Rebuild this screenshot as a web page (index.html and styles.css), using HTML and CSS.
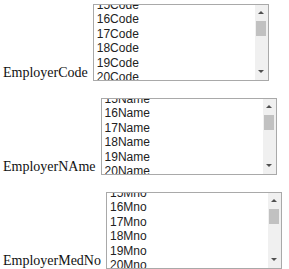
FILE: index.html
```html
<!DOCTYPE html>
<html lang="en">
<head>
    <meta charset="UTF-8">
    <title>Employer lists</title>
    <link rel="stylesheet" href="styles.css">
</head>
<body>
    <div class="field">
        <span class="label">EmployerCode</span>
        <div class="listbox">
            <div class="items">
                <div class="item">15Code</div>
                <div class="item">16Code</div>
                <div class="item">17Code</div>
                <div class="item">18Code</div>
                <div class="item">19Code</div>
                <div class="item">20Code</div>
            </div>
            <div class="scrollbar">
                <span class="arrow up"></span>
                <span class="thumb"></span>
                <span class="arrow down"></span>
            </div>
        </div>
    </div>

    <div class="field">
        <span class="label">EmployerNAme</span>
        <div class="listbox">
            <div class="items">
                <div class="item">15Name</div>
                <div class="item">16Name</div>
                <div class="item">17Name</div>
                <div class="item">18Name</div>
                <div class="item">19Name</div>
                <div class="item">20Name</div>
            </div>
            <div class="scrollbar">
                <span class="arrow up"></span>
                <span class="thumb"></span>
                <span class="arrow down"></span>
            </div>
        </div>
    </div>

    <div class="field">
        <span class="label">EmployerMedNo</span>
        <div class="listbox">
            <div class="items">
                <div class="item">15Mno</div>
                <div class="item">16Mno</div>
                <div class="item">17Mno</div>
                <div class="item">18Mno</div>
                <div class="item">19Mno</div>
                <div class="item">20Mno</div>
            </div>
            <div class="scrollbar">
                <span class="arrow up"></span>
                <span class="thumb"></span>
                <span class="arrow down"></span>
            </div>
        </div>
    </div>
</body>
</html>
```

FILE: styles.css
```css
body {
    margin: 0;
    padding: 4px 0 0 3px;
    background-color: #fff;
    font-family: "Liberation Serif", "Times New Roman", serif;
    font-size: 14px;
    color: #111;
}
.field {
    display: flex;
    align-items: flex-end;
    margin-bottom: 17px;
}
.field:last-child {
    margin-bottom: 0;
}
.label {
    line-height: 16px;
    margin-right: 5px;
}
.listbox {
    display: flex;
    width: 174px;
    height: 75px;
    border: 1px solid #a9a9a9;
    overflow: hidden;
    background-color: #fff;
}
.items {
    flex-grow: 1;
    margin-top: -7px;
    padding-left: 3px;
    font-family: "Liberation Sans", Arial, sans-serif;
    font-size: 12px;
    line-height: 14.4px;
    color: #222;
}
.scrollbar {
    width: 13px;
    display: flex;
    flex-direction: column;
    align-items: center;
    background-color: #f0f0f0;
    position: relative;
}
.arrow {
    position: absolute;
    width: 0;
    height: 0;
    border-left: 3px solid transparent;
    border-right: 3px solid transparent;
}
.arrow.up {
    top: 6px;
    border-bottom: 3px solid #505050;
}
.arrow.down {
    bottom: 7px;
    border-top: 3px solid #505050;
}
.thumb {
    margin-top: 16px;
    width: 10px;
    height: 15px;
    background-color: #c1c1c1;
}
```
